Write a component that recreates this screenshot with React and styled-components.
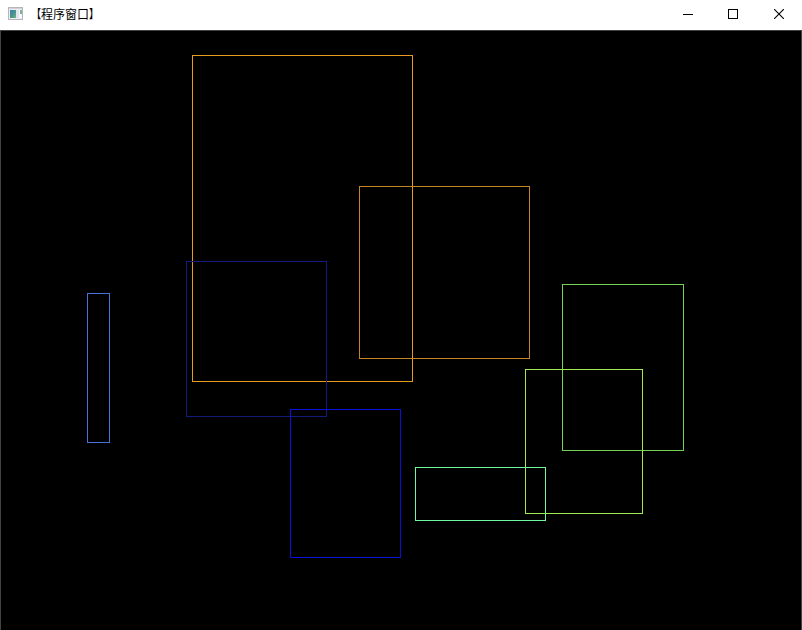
import React from 'react';
import styled, { createGlobalStyle } from 'styled-components';

const GlobalStyle = createGlobalStyle`
  * { box-sizing: border-box; }
  body { margin: 0; background: #fff; overflow: hidden; }
`;

const Window = styled.div`
  width: 802px;
  height: 630px;
  display: flex;
  flex-direction: column;
  background: #fff;
  overflow: hidden;
`;

const TitleBar = styled.header`
  height: 30px;
  flex: none;
  display: flex;
  align-items: center;
  padding-left: 8px;
`;

const AppIcon = styled.svg`
  display: block;
  flex: none;
  margin-top: -2px;
`;

const Title = styled.h1`
  flex: 1;
  display: flex;
  margin: -2px 0 0 5px;
  color: #000;
  font: 400 12px/28px "Noto Sans CJK SC", sans-serif;
  white-space: nowrap;
`;

const Bracket = styled.span`
  width: 12px;
  transform: scaleX(0.8);
  transform-origin: ${({ $inner }) => $inner} center;
`;

const Controls = styled.div`
  display: flex;
  height: 30px;
`;

const ControlButton = styled.button`
  width: ${({ $width }) => $width}px;
  height: 28px;
  display: flex;
  align-items: center;
  justify-content: center;
  padding: 0;
  border: 0;
  background: transparent;
  color: #000;

  svg { display: block; }
`;

const Canvas = styled.main`
  flex: 1;
  position: relative;
  background: #000;
  border: 1px solid #434343;
  border-bottom: 0;
`;

/* Each outline has a free position on the drawing surface. */
const Outline = styled.div`
  position: absolute;
  left: ${({ $x }) => $x}px;
  top: ${({ $y }) => $y}px;
  width: ${({ $w }) => $w}px;
  height: ${({ $h }) => $h}px;
  border: 1px solid ${({ $color }) => $color};
`;

const rectangles = [
  { x: 358, y: 155, w: 171, h: 173, color: '#c68321' },
  { x: 191, y: 24, w: 221, h: 327, color: '#e99b1d' },
  { x: 185, y: 230, w: 141, h: 156, color: '#151b7c' },
  { x: 86, y: 262, w: 23, h: 150, color: '#4a72dc' },
  { x: 289, y: 378, w: 111, h: 149, color: '#0a10d8' },
  { x: 561, y: 253, w: 122, h: 167, color: '#72d353' },
  { x: 524, y: 338, w: 118, h: 145, color: '#a0ea4c' },
  { x: 414, y: 436, w: 131, h: 54, color: '#72f7a0' },
];

export default function App() {
  return (
    <Window>
      <GlobalStyle />
      <TitleBar>
        <AppIcon width="16" height="14" viewBox="0 0 16 14" shapeRendering="crispEdges">
          <defs>
            <linearGradient id="pane" x1="0" y1="0" x2="1" y2="1">
              <stop offset="0" stopColor="#3f79ae" />
              <stop offset="0.55" stopColor="#4c9491" />
              <stop offset="1" stopColor="#70b77a" />
            </linearGradient>
          </defs>
          <rect x="0" y="0" width="15" height="13" fill="#b4b6bc" />
          <rect x="1" y="1" width="13" height="1" fill="#d0d2d8" />
          <rect x="1" y="2" width="13" height="10" fill="#eceef2" />
          <rect x="2" y="3" width="6" height="8" fill="url(#pane)" />
          <rect x="8" y="3" width="3" height="8" fill="#e2e6ec" />
          <rect x="11" y="3" width="3" height="8" fill="#f8f9fa" />
          <rect x="12" y="3" width="2" height="4" fill="#78b78c" />
        </AppIcon>
        <Title>
          <Bracket $inner="right">【</Bracket>
          程序窗口
          <Bracket $inner="left">】</Bracket>
        </Title>
        <Controls>
          <ControlButton $width={45} aria-label="最小化">
            <svg width="10" height="10" shapeRendering="crispEdges">
              <rect y="5" width="10" height="1" />
            </svg>
          </ControlButton>
          <ControlButton $width={46} aria-label="最大化">
            <svg width="10" height="10" shapeRendering="crispEdges">
              <rect x="0.5" y="0.5" width="9" height="9" fill="none" stroke="#000" />
            </svg>
          </ControlButton>
          <ControlButton $width={46} aria-label="关闭">
            <svg width="10" height="10">
              <path d="M0 0L10 10M10 0L0 10" fill="none" stroke="#000" strokeWidth="1.1" />
            </svg>
          </ControlButton>
        </Controls>
      </TitleBar>
      <Canvas>
        {rectangles.map((r) => (
          <Outline key={r.color} $x={r.x} $y={r.y} $w={r.w} $h={r.h} $color={r.color} />
        ))}
      </Canvas>
    </Window>
  );
}
